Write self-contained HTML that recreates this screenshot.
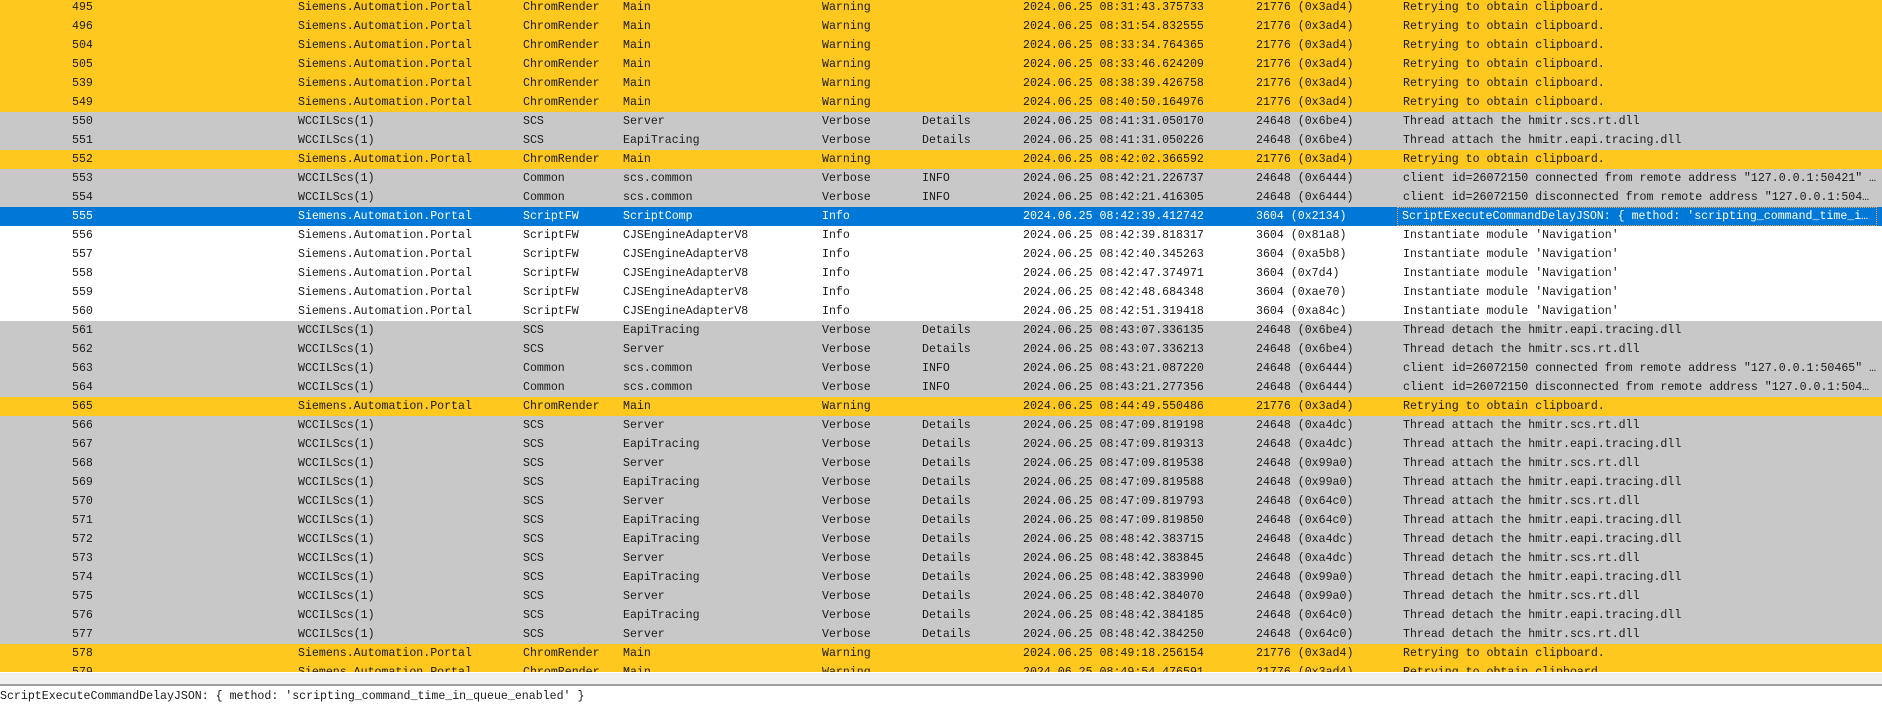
<!DOCTYPE html>
<html><head><meta charset="utf-8"><style>
html,body{margin:0;padding:0;width:1882px;height:719px;overflow:hidden;background:#fff}
body{font-family:"Liberation Mono",monospace;font-size:11.6px;color:#1a1a1a}
#g{position:absolute;left:0;top:-2px;width:1882px;height:674px;overflow:hidden}
.r{position:relative;height:19px;line-height:19px;white-space:nowrap}
.r span{position:absolute;top:0}
.y{background:#fec81f}.g{background:#c8c8c8}.w{background:#fff}.s{background:#0078d7;color:#fff}
.a{left:72px}.b{left:298px}.c{left:523px}.d{left:623px}.e{left:822px}.f{left:922px}.h{left:1023px}.p{left:1256px}
.m{left:1403px;width:474px;overflow:hidden;text-overflow:ellipsis}
.s .m{left:1398px;width:478px;padding-left:4px;box-sizing:border-box;height:17px;line-height:17px;top:1px;outline:1px dotted #f0a040}
#bar1{position:absolute;left:0;top:672px;width:1882px;height:1px;background:#fff}
#bar2{position:absolute;left:0;top:673px;width:1882px;height:11px;background:#f0f0f0}
#bar3{position:absolute;left:0;top:684px;width:1882px;height:2px;background:#a0a0a0}
#bt{position:absolute;left:0;top:688px;line-height:18px;white-space:nowrap}
</style></head><body>
<div id="g">
<div class="r y"><span class="a">495</span><span class="b">Siemens.Automation.Portal</span><span class="c">ChromRender</span><span class="d">Main</span><span class="e">Warning</span><span class="h">2024.06.25 08:31:43.375733</span><span class="p">21776 (0x3ad4)</span><span class="m">Retrying to obtain clipboard.</span></div>
<div class="r y"><span class="a">496</span><span class="b">Siemens.Automation.Portal</span><span class="c">ChromRender</span><span class="d">Main</span><span class="e">Warning</span><span class="h">2024.06.25 08:31:54.832555</span><span class="p">21776 (0x3ad4)</span><span class="m">Retrying to obtain clipboard.</span></div>
<div class="r y"><span class="a">504</span><span class="b">Siemens.Automation.Portal</span><span class="c">ChromRender</span><span class="d">Main</span><span class="e">Warning</span><span class="h">2024.06.25 08:33:34.764365</span><span class="p">21776 (0x3ad4)</span><span class="m">Retrying to obtain clipboard.</span></div>
<div class="r y"><span class="a">505</span><span class="b">Siemens.Automation.Portal</span><span class="c">ChromRender</span><span class="d">Main</span><span class="e">Warning</span><span class="h">2024.06.25 08:33:46.624209</span><span class="p">21776 (0x3ad4)</span><span class="m">Retrying to obtain clipboard.</span></div>
<div class="r y"><span class="a">539</span><span class="b">Siemens.Automation.Portal</span><span class="c">ChromRender</span><span class="d">Main</span><span class="e">Warning</span><span class="h">2024.06.25 08:38:39.426758</span><span class="p">21776 (0x3ad4)</span><span class="m">Retrying to obtain clipboard.</span></div>
<div class="r y"><span class="a">549</span><span class="b">Siemens.Automation.Portal</span><span class="c">ChromRender</span><span class="d">Main</span><span class="e">Warning</span><span class="h">2024.06.25 08:40:50.164976</span><span class="p">21776 (0x3ad4)</span><span class="m">Retrying to obtain clipboard.</span></div>
<div class="r g"><span class="a">550</span><span class="b">WCCILScs(1)</span><span class="c">SCS</span><span class="d">Server</span><span class="e">Verbose</span><span class="f">Details</span><span class="h">2024.06.25 08:41:31.050170</span><span class="p">24648 (0x6be4)</span><span class="m">Thread attach the hmitr.scs.rt.dll</span></div>
<div class="r g"><span class="a">551</span><span class="b">WCCILScs(1)</span><span class="c">SCS</span><span class="d">EapiTracing</span><span class="e">Verbose</span><span class="f">Details</span><span class="h">2024.06.25 08:41:31.050226</span><span class="p">24648 (0x6be4)</span><span class="m">Thread attach the hmitr.eapi.tracing.dll</span></div>
<div class="r y"><span class="a">552</span><span class="b">Siemens.Automation.Portal</span><span class="c">ChromRender</span><span class="d">Main</span><span class="e">Warning</span><span class="h">2024.06.25 08:42:02.366592</span><span class="p">21776 (0x3ad4)</span><span class="m">Retrying to obtain clipboard.</span></div>
<div class="r g"><span class="a">553</span><span class="b">WCCILScs(1)</span><span class="c">Common</span><span class="d">scs.common</span><span class="e">Verbose</span><span class="f">INFO</span><span class="h">2024.06.25 08:42:21.226737</span><span class="p">24648 (0x6444)</span><span class="m">client id=26072150 connected from remote address "127.0.0.1:50421" …</span></div>
<div class="r g"><span class="a">554</span><span class="b">WCCILScs(1)</span><span class="c">Common</span><span class="d">scs.common</span><span class="e">Verbose</span><span class="f">INFO</span><span class="h">2024.06.25 08:42:21.416305</span><span class="p">24648 (0x6444)</span><span class="m">client id=26072150 disconnected from remote address "127.0.0.1:504…</span></div>
<div class="r s"><span class="a">555</span><span class="b">Siemens.Automation.Portal</span><span class="c">ScriptFW</span><span class="d">ScriptComp</span><span class="e">Info</span><span class="h">2024.06.25 08:42:39.412742</span><span class="p">3604 (0x2134)</span><span class="m">ScriptExecuteCommandDelayJSON: { method: 'scripting_command_time_i…</span></div>
<div class="r w"><span class="a">556</span><span class="b">Siemens.Automation.Portal</span><span class="c">ScriptFW</span><span class="d">CJSEngineAdapterV8</span><span class="e">Info</span><span class="h">2024.06.25 08:42:39.818317</span><span class="p">3604 (0x81a8)</span><span class="m">Instantiate module 'Navigation'</span></div>
<div class="r w"><span class="a">557</span><span class="b">Siemens.Automation.Portal</span><span class="c">ScriptFW</span><span class="d">CJSEngineAdapterV8</span><span class="e">Info</span><span class="h">2024.06.25 08:42:40.345263</span><span class="p">3604 (0xa5b8)</span><span class="m">Instantiate module 'Navigation'</span></div>
<div class="r w"><span class="a">558</span><span class="b">Siemens.Automation.Portal</span><span class="c">ScriptFW</span><span class="d">CJSEngineAdapterV8</span><span class="e">Info</span><span class="h">2024.06.25 08:42:47.374971</span><span class="p">3604 (0x7d4)</span><span class="m">Instantiate module 'Navigation'</span></div>
<div class="r w"><span class="a">559</span><span class="b">Siemens.Automation.Portal</span><span class="c">ScriptFW</span><span class="d">CJSEngineAdapterV8</span><span class="e">Info</span><span class="h">2024.06.25 08:42:48.684348</span><span class="p">3604 (0xae70)</span><span class="m">Instantiate module 'Navigation'</span></div>
<div class="r w"><span class="a">560</span><span class="b">Siemens.Automation.Portal</span><span class="c">ScriptFW</span><span class="d">CJSEngineAdapterV8</span><span class="e">Info</span><span class="h">2024.06.25 08:42:51.319418</span><span class="p">3604 (0xa84c)</span><span class="m">Instantiate module 'Navigation'</span></div>
<div class="r g"><span class="a">561</span><span class="b">WCCILScs(1)</span><span class="c">SCS</span><span class="d">EapiTracing</span><span class="e">Verbose</span><span class="f">Details</span><span class="h">2024.06.25 08:43:07.336135</span><span class="p">24648 (0x6be4)</span><span class="m">Thread detach the hmitr.eapi.tracing.dll</span></div>
<div class="r g"><span class="a">562</span><span class="b">WCCILScs(1)</span><span class="c">SCS</span><span class="d">Server</span><span class="e">Verbose</span><span class="f">Details</span><span class="h">2024.06.25 08:43:07.336213</span><span class="p">24648 (0x6be4)</span><span class="m">Thread detach the hmitr.scs.rt.dll</span></div>
<div class="r g"><span class="a">563</span><span class="b">WCCILScs(1)</span><span class="c">Common</span><span class="d">scs.common</span><span class="e">Verbose</span><span class="f">INFO</span><span class="h">2024.06.25 08:43:21.087220</span><span class="p">24648 (0x6444)</span><span class="m">client id=26072150 connected from remote address "127.0.0.1:50465" …</span></div>
<div class="r g"><span class="a">564</span><span class="b">WCCILScs(1)</span><span class="c">Common</span><span class="d">scs.common</span><span class="e">Verbose</span><span class="f">INFO</span><span class="h">2024.06.25 08:43:21.277356</span><span class="p">24648 (0x6444)</span><span class="m">client id=26072150 disconnected from remote address "127.0.0.1:504…</span></div>
<div class="r y"><span class="a">565</span><span class="b">Siemens.Automation.Portal</span><span class="c">ChromRender</span><span class="d">Main</span><span class="e">Warning</span><span class="h">2024.06.25 08:44:49.550486</span><span class="p">21776 (0x3ad4)</span><span class="m">Retrying to obtain clipboard.</span></div>
<div class="r g"><span class="a">566</span><span class="b">WCCILScs(1)</span><span class="c">SCS</span><span class="d">Server</span><span class="e">Verbose</span><span class="f">Details</span><span class="h">2024.06.25 08:47:09.819198</span><span class="p">24648 (0xa4dc)</span><span class="m">Thread attach the hmitr.scs.rt.dll</span></div>
<div class="r g"><span class="a">567</span><span class="b">WCCILScs(1)</span><span class="c">SCS</span><span class="d">EapiTracing</span><span class="e">Verbose</span><span class="f">Details</span><span class="h">2024.06.25 08:47:09.819313</span><span class="p">24648 (0xa4dc)</span><span class="m">Thread attach the hmitr.eapi.tracing.dll</span></div>
<div class="r g"><span class="a">568</span><span class="b">WCCILScs(1)</span><span class="c">SCS</span><span class="d">Server</span><span class="e">Verbose</span><span class="f">Details</span><span class="h">2024.06.25 08:47:09.819538</span><span class="p">24648 (0x99a0)</span><span class="m">Thread attach the hmitr.scs.rt.dll</span></div>
<div class="r g"><span class="a">569</span><span class="b">WCCILScs(1)</span><span class="c">SCS</span><span class="d">EapiTracing</span><span class="e">Verbose</span><span class="f">Details</span><span class="h">2024.06.25 08:47:09.819588</span><span class="p">24648 (0x99a0)</span><span class="m">Thread attach the hmitr.eapi.tracing.dll</span></div>
<div class="r g"><span class="a">570</span><span class="b">WCCILScs(1)</span><span class="c">SCS</span><span class="d">Server</span><span class="e">Verbose</span><span class="f">Details</span><span class="h">2024.06.25 08:47:09.819793</span><span class="p">24648 (0x64c0)</span><span class="m">Thread attach the hmitr.scs.rt.dll</span></div>
<div class="r g"><span class="a">571</span><span class="b">WCCILScs(1)</span><span class="c">SCS</span><span class="d">EapiTracing</span><span class="e">Verbose</span><span class="f">Details</span><span class="h">2024.06.25 08:47:09.819850</span><span class="p">24648 (0x64c0)</span><span class="m">Thread attach the hmitr.eapi.tracing.dll</span></div>
<div class="r g"><span class="a">572</span><span class="b">WCCILScs(1)</span><span class="c">SCS</span><span class="d">EapiTracing</span><span class="e">Verbose</span><span class="f">Details</span><span class="h">2024.06.25 08:48:42.383715</span><span class="p">24648 (0xa4dc)</span><span class="m">Thread detach the hmitr.eapi.tracing.dll</span></div>
<div class="r g"><span class="a">573</span><span class="b">WCCILScs(1)</span><span class="c">SCS</span><span class="d">Server</span><span class="e">Verbose</span><span class="f">Details</span><span class="h">2024.06.25 08:48:42.383845</span><span class="p">24648 (0xa4dc)</span><span class="m">Thread detach the hmitr.scs.rt.dll</span></div>
<div class="r g"><span class="a">574</span><span class="b">WCCILScs(1)</span><span class="c">SCS</span><span class="d">EapiTracing</span><span class="e">Verbose</span><span class="f">Details</span><span class="h">2024.06.25 08:48:42.383990</span><span class="p">24648 (0x99a0)</span><span class="m">Thread detach the hmitr.eapi.tracing.dll</span></div>
<div class="r g"><span class="a">575</span><span class="b">WCCILScs(1)</span><span class="c">SCS</span><span class="d">Server</span><span class="e">Verbose</span><span class="f">Details</span><span class="h">2024.06.25 08:48:42.384070</span><span class="p">24648 (0x99a0)</span><span class="m">Thread detach the hmitr.scs.rt.dll</span></div>
<div class="r g"><span class="a">576</span><span class="b">WCCILScs(1)</span><span class="c">SCS</span><span class="d">EapiTracing</span><span class="e">Verbose</span><span class="f">Details</span><span class="h">2024.06.25 08:48:42.384185</span><span class="p">24648 (0x64c0)</span><span class="m">Thread detach the hmitr.eapi.tracing.dll</span></div>
<div class="r g"><span class="a">577</span><span class="b">WCCILScs(1)</span><span class="c">SCS</span><span class="d">Server</span><span class="e">Verbose</span><span class="f">Details</span><span class="h">2024.06.25 08:48:42.384250</span><span class="p">24648 (0x64c0)</span><span class="m">Thread detach the hmitr.scs.rt.dll</span></div>
<div class="r y"><span class="a">578</span><span class="b">Siemens.Automation.Portal</span><span class="c">ChromRender</span><span class="d">Main</span><span class="e">Warning</span><span class="h">2024.06.25 08:49:18.256154</span><span class="p">21776 (0x3ad4)</span><span class="m">Retrying to obtain clipboard.</span></div>
<div class="r y"><span class="a">579</span><span class="b">Siemens.Automation.Portal</span><span class="c">ChromRender</span><span class="d">Main</span><span class="e">Warning</span><span class="h">2024.06.25 08:49:54.476591</span><span class="p">21776 (0x3ad4)</span><span class="m">Retrying to obtain clipboard.</span></div>
</div>
<div id="bar1"></div><div id="bar2"></div><div id="bar3"></div>
<div id="bt">ScriptExecuteCommandDelayJSON: { method: 'scripting_command_time_in_queue_enabled' }</div>
</body></html>
